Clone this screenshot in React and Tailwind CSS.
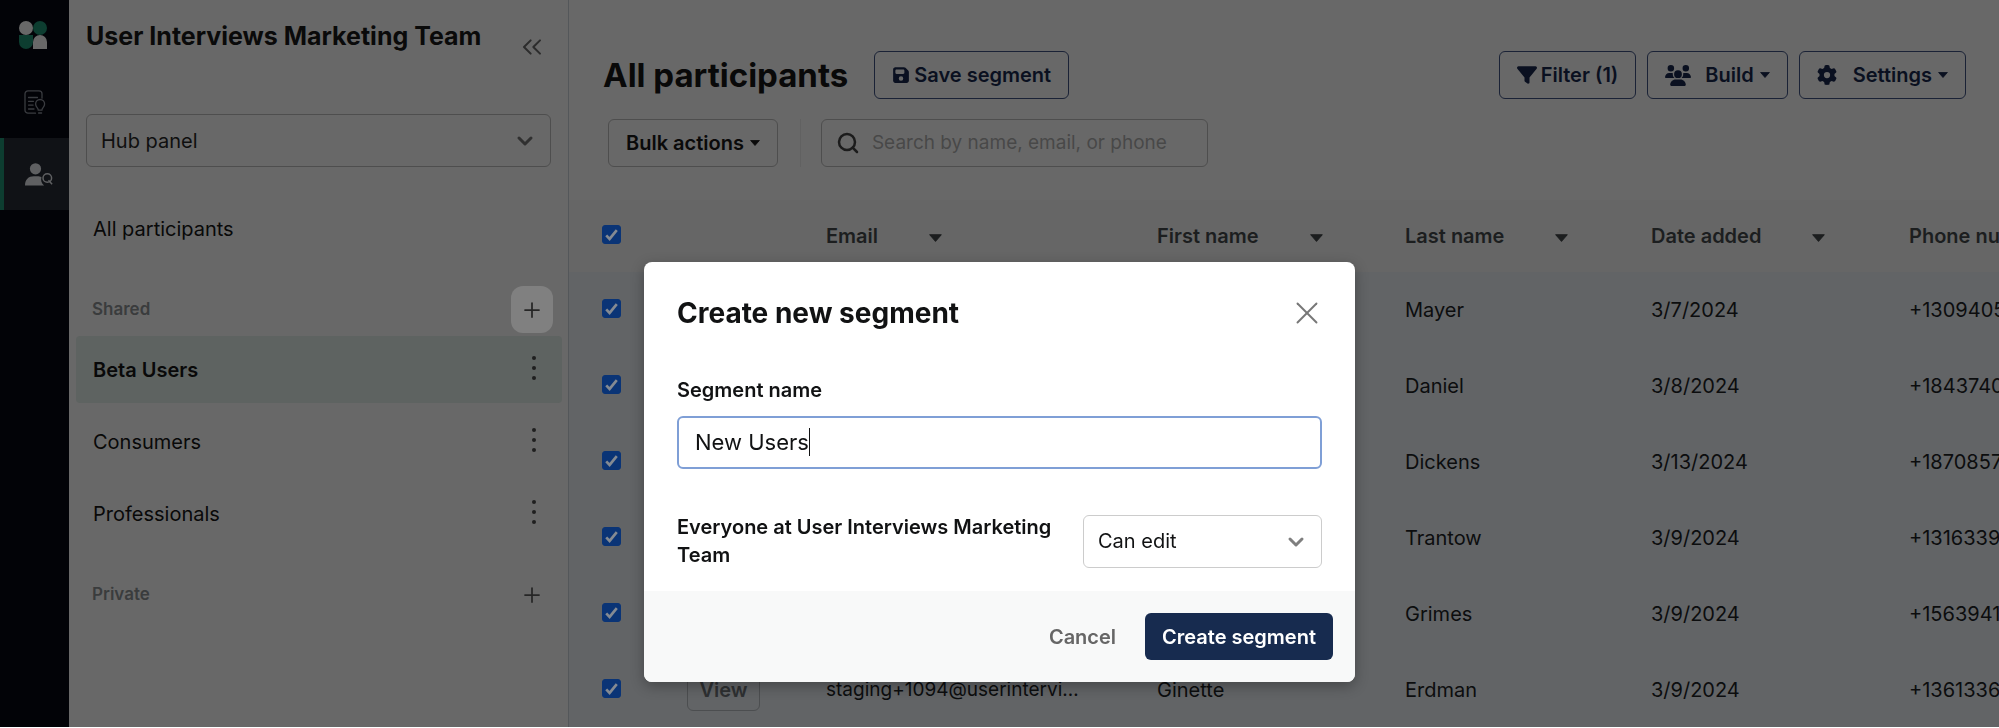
import React, { useState } from 'react';
import { FaFloppyDisk, FaFilter, FaUsers, FaGear } from 'react-icons/fa6';
import { ChevronDown, ChevronsLeft, Search, Plus, X } from 'lucide-react';

const sharedSegments = ['Beta Users', 'Consumers', 'Professionals'];

const participants = [
  { id: 1089, email: 'staging+1089@userinterviews.com', first: 'Oscar', last: 'Mayer', date: '3/7/2024', phone: '+13094055512' },
  { id: 1090, email: 'staging+1090@userinterviews.com', first: 'Jack', last: 'Daniel', date: '3/8/2024', phone: '+18437405512' },
  { id: 1091, email: 'staging+1091@userinterviews.com', first: 'Charles', last: 'Dickens', date: '3/13/2024', phone: '+18708575512' },
  { id: 1092, email: 'staging+1092@userinterviews.com', first: 'Alva', last: 'Trantow', date: '3/9/2024', phone: '+13163395512' },
  { id: 1093, email: 'staging+1093@userinterviews.com', first: 'Frank', last: 'Grimes', date: '3/9/2024', phone: '+15639415512' },
  { id: 1094, email: 'staging+1094@userinterviews.com', first: 'Ginette', last: 'Erdman', date: '3/9/2024', phone: '+13613365512' },
];

const Caret = ({ className }) => (
  <svg className={className} viewBox="0 0 10 6" fill="currentColor" aria-hidden="true">
    <path d="M0.6 0.5h8.8L5 5.5z" stroke="currentColor" strokeWidth="0.8" strokeLinejoin="round" />
  </svg>
);

const CheckBox = ({ label }) => {
  const [checked, setChecked] = useState(true);
  return (
    <label className="relative block size-[19px]">
      <input
        type="checkbox"
        aria-label={label}
        checked={checked}
        onChange={(e) => setChecked(e.target.checked)}
        className="block size-[19px] appearance-none rounded-[3px] border border-[#2b2b2b] checked:border-[#0a3476] checked:bg-[#0a3476]"
      />
      {checked && (
        <svg className="pointer-events-none absolute inset-0 size-[19px] text-[#848a92]" viewBox="0 0 18 18" fill="none">
          <path d="M4 9.8l3.2 3.4L14 4.8" stroke="currentColor" strokeWidth="2.5" />
        </svg>
      )}
    </label>
  );
};

const NavRail = () => (
  <nav className="flex w-[69px] shrink-0 flex-col bg-[#020307]">
    <a href="#home" aria-label="Home" className="flex h-[70px] items-center justify-center pr-1">
      <svg className="size-7" viewBox="0 0 28 28">
        <circle cx="7" cy="7" r="7" fill="#686868" />
        <circle cx="21" cy="7" r="7" fill="#0d3d30" />
        <path d="M0 14h14v7a7 7 0 01-14 0z" fill="#0d3d30" />
        <path d="M14 28v-7a7 7 0 0114 0v7z" fill="#686868" />
      </svg>
    </a>
    <a href="#projects" aria-label="Projects" className="flex h-[68px] items-center justify-center pb-1">
      <svg className="h-6 w-[22px] text-[#3a3c40]" viewBox="0 0 22 24" fill="none" stroke="currentColor" strokeWidth="1.3" strokeLinecap="round">
        <path d="M11.5 23.2H4a3 3 0 01-3-3V3.8a3 3 0 013-3h11a3 3 0 013 3v4.4" />
        <path d="M4.5 7.5h9M4.5 11.3h5M4.5 15.1h4.6M4.5 19h5.5" />
        <path d="M14.3 20.2c0-2.2-2.7-3-2.7-6.2a4.5 4.5 0 019 0c0 3.2-2.7 4-2.7 6.2zM14.6 23h3" />
      </svg>
    </a>
    <a href="#participants" aria-label="Participants" className="flex h-[72px] items-center justify-center border-l-4 border-[#0d3d30] bg-[#101216]">
      <svg className="ml-1 h-[23px] w-[28px] text-[#5f6062]" viewBox="0 0 28 23" fill="currentColor">
        <circle cx="10.5" cy="5.8" r="5.6" />
        <path d="M0 22.5c0-6 3.5-9.3 8.8-9.3h3.4c1.8 0 3.1.3 4.3 1-1 3 0 6.3 2.6 8.3z" />
        <circle cx="22.3" cy="15" r="4.3" fill="none" stroke="currentColor" strokeWidth="1.5" />
        <path d="M23.5 17.2l3.6 4" stroke="currentColor" strokeWidth="1.5" />
      </svg>
    </a>
  </nav>
);

const SegmentRow = ({ name, active }) => (
  <li
    className={`flex h-[67px] items-center justify-between rounded pr-6 pl-[17px] ${
      active ? 'bg-[#5e6361] font-semibold' : ''
    }`}
  >
    <a href="#segment">{name}</a>
    <button type="button" aria-label={`${name} options`} className="pb-1 text-[#1f1f1f]">
      <svg className="h-7 w-2" viewBox="0 0 8 28" fill="currentColor">
        <circle cx="4" cy="4" r="2" />
        <circle cx="4" cy="14" r="2" />
        <circle cx="4" cy="24" r="2" />
      </svg>
    </button>
  </li>
);

const SectionHeader = ({ title, highlighted }) => (
  <div className="flex h-[47px] items-center justify-between pr-[9px] pl-4">
    <h2 className="text-[17px] font-semibold text-[#3a3c3d]">{title}</h2>
    <button
      type="button"
      aria-label={`Add ${title.toLowerCase()} segment`}
      className={`flex h-[47px] w-[42px] items-center justify-center rounded-xl text-[#262626] ${
        highlighted ? 'bg-[#808080]' : ''
      }`}
    >
      <Plus className="size-6" strokeWidth={1.75} />
    </button>
  </div>
);

const Sidebar = () => (
  <aside className="w-[500px] shrink-0 border-r border-[#54575a]">
    <div className="flex items-start justify-between pt-[18px] pr-5 pl-[17px]">
      <h1 className="text-[25px] leading-9 font-bold text-[#0a0a0a]">User Interviews Marketing Team</h1>
      <button type="button" aria-label="Collapse sidebar" className="mt-[13px] text-[#2c2c2c]">
        <ChevronsLeft className="size-8" strokeWidth={1.5} />
      </button>
    </div>
    <div className="relative mt-[51px] mr-[17px] ml-[17px]">
      <select
        aria-label="Panel"
        className="h-[53px] w-full appearance-none rounded-md border border-[#4e4e4e] bg-transparent px-3.5 text-[20px] text-[#0f0f0f]"
      >
        <option>Hub panel</option>
      </select>
      <ChevronDown className="pointer-events-none absolute top-[15px] right-3.5 size-6 text-[#303030]" strokeWidth={3} />
    </div>
    <div className="pr-1.5 pl-[7px] text-[20px] text-[#090909]">
      <a href="#all" className="mt-7 flex h-[67px] items-center pl-[17px]">All participants</a>
      <div className="mt-6">
        <SectionHeader title="Shared" highlighted />
      </div>
      <ul className="mt-[3px] flex flex-col gap-[5px]">
        {sharedSegments.map((name, i) => (
          <SegmentRow key={name} name={name} active={i === 0} />
        ))}
      </ul>
      <div className="mt-6">
        <SectionHeader title="Private" />
      </div>
    </div>
  </aside>
);

const outlineButton =
  'flex h-[48px] items-center rounded-md border border-[#1a2236] px-[17px] text-[20px] font-semibold text-[#0a1020]';

const PageHeader = () => (
  <header className="pr-[33px] pl-[34px]">
    <div className="flex items-center pt-[51px]">
      <h1 className="text-[33px] leading-[48px] font-bold text-[#090909]">All participants</h1>
      <button type="button" className={`${outlineButton} ml-[26px] gap-1`}>
        <FaFloppyDisk className="size-[18px]" />
        Save segment
      </button>
      <div className="ml-auto flex gap-[11px]">
        <button type="button" className={`${outlineButton} gap-1`}>
          <FaFilter className="size-5" />
          Filter (1)
        </button>
        <button type="button" className={outlineButton}>
          <FaUsers className="mr-[14px] h-[21px] w-[26px]" />
          Build
          <Caret className="ml-1.5 h-[6px] w-[10px]" />
        </button>
        <button type="button" className={outlineButton}>
          <FaGear className="mr-4 size-5" />
          Settings
          <Caret className="ml-1.5 h-[6px] w-[10px]" />
        </button>
      </div>
    </div>
    <div className="mt-5 flex pl-[5px]">
      <button
        type="button"
        className="flex h-[48px] items-center rounded-md border border-[#4e4e4e] px-[17px] text-[20px] font-semibold text-[#0a0a0a]"
      >
        Bulk actions
        <Caret className="ml-1.5 h-[6px] w-[10px]" />
      </button>
      <div className="mr-5 ml-[22px] w-px bg-[#616161]" />
      <div className="flex h-[48px] w-[387px] items-center rounded-md border border-[#4e4e4e] px-3.5">
        <Search className="size-6 shrink-0 text-[#1c1c1c]" strokeWidth={2.5} />
        <input
          type="text"
          aria-label="Search participants"
          placeholder="Search by name, email, or phone"
          className="ml-3 min-w-0 flex-1 bg-transparent text-[19px] outline-none placeholder:text-[#484848]"
        />
      </div>
    </div>
  </header>
);

const ColumnHeader = ({ title, width }) => (
  <th className={`${width} p-0 text-left font-semibold`}>
    <button type="button" className="flex items-center gap-[51px]">
      {title}
      <Caret className="mt-1 h-[8px] w-[13px]" />
    </button>
  </th>
);

const ParticipantsTable = () => (
  <div className="mt-[33px] overflow-hidden">
    <table className="w-[1600px] table-fixed text-[20px]">
      <thead className="bg-[#666] text-[#1c1e1f]">
        <tr className="h-[72px]">
          <th className="w-[118px] p-0 pb-1 pl-[33px]">
            <CheckBox label="Select all participants" />
          </th>
          <th className="w-[139px] p-0" />
          <ColumnHeader title="Email" width="w-[331px]" />
          <ColumnHeader title="First name" width="w-[248px]" />
          <ColumnHeader title="Last name" width="w-[246px]" />
          <ColumnHeader title="Date added" width="w-[258px]" />
          <ColumnHeader title="Phone number" width="w-[260px]" />
        </tr>
      </thead>
      <tbody className="bg-[#626466] text-[#0c0d0e]">
        {participants.map((person) => (
          <tr key={person.id} className="h-[76px]">
            <td className="p-0 pb-1 pl-[33px]">
              <CheckBox label={`Select ${person.first} ${person.last}`} />
            </td>
            <td className="p-0">
              <button type="button" className="h-[42px] w-[73px] rounded-md border border-[#4c4e50] font-semibold text-[#2e3032]">
                View
              </button>
            </td>
            <td className="truncate p-0 pr-[70px] text-[19px]">{person.email}</td>
            <td className="p-0">{person.first}</td>
            <td className="p-0">{person.last}</td>
            <td className="p-0">{person.date}</td>
            <td className="p-0">{person.phone}</td>
          </tr>
        ))}
      </tbody>
    </table>
  </div>
);

const CreateSegmentModal = () => {
  const [name, setName] = useState('New Users');

  return (
    <div className="fixed inset-0 flex items-start justify-center pt-[262px]">
      <form
        role="dialog"
        aria-labelledby="modal-title"
        onSubmit={(e) => e.preventDefault()}
        className="w-[711px] overflow-hidden rounded-lg bg-white text-[#111213] shadow-[0_4px_14px_rgba(0,0,0,0.3)]"
      >
        <div className="px-[33px] pt-8 pb-[22px]">
          <div className="flex items-center justify-between">
            <h2 id="modal-title" className="text-[28px] leading-[38px] font-bold">Create new segment</h2>
            <button type="button" aria-label="Close" className="-mr-1 text-[#777]">
              <X className="size-[38px]" strokeWidth={1.2} />
            </button>
          </div>
          <label htmlFor="segment-name" className="mt-11 block text-[20px] leading-7 font-semibold">
            Segment name
          </label>
          <div className="relative mt-3">
            <input
              id="segment-name"
              type="text"
              value={name}
              onChange={(e) => setName(e.target.value)}
              className="block h-[53px] w-full rounded-md border-2 border-[#7f9fd6] px-4 pb-0.5 text-[22px] outline-none"
            />
            {/* text cursor */}
            <span className="pointer-events-none absolute top-3 left-[132px] h-7 w-px bg-[#111213]" />
          </div>
          <div className="mt-11 flex items-center justify-between">
            <label htmlFor="segment-access" className="w-[380px] text-[20px] leading-7 font-semibold">
              Everyone at User Interviews Marketing Team
            </label>
            <div className="relative w-[239px]">
              <select
                id="segment-access"
                className="h-[53px] w-full appearance-none rounded-md border border-[#ccc] bg-white px-3.5 text-[20px]"
              >
                <option>Can edit</option>
              </select>
              <ChevronDown className="pointer-events-none absolute top-[15px] right-3.5 size-6 text-[#7f7f7f]" strokeWidth={3} />
            </div>
          </div>
        </div>
        <div className="flex items-center justify-end gap-[29px] bg-[#f8f9f9] p-[22px] text-[20px] font-semibold">
          <button type="button" className="text-[#666]">Cancel</button>
          <button type="submit" className="h-[47px] rounded-md bg-[#172b4f] px-[17px] text-white">
            Create segment
          </button>
        </div>
      </form>
    </div>
  );
};

export default function App() {
  return (
    <div className="flex h-screen overflow-hidden border-b border-white bg-[#686868] font-['Inter',sans-serif] text-[20px]">
      <NavRail />
      <Sidebar />
      <main className="min-w-0 flex-1">
        <PageHeader />
        <ParticipantsTable />
      </main>
      <CreateSegmentModal />
    </div>
  );
}
